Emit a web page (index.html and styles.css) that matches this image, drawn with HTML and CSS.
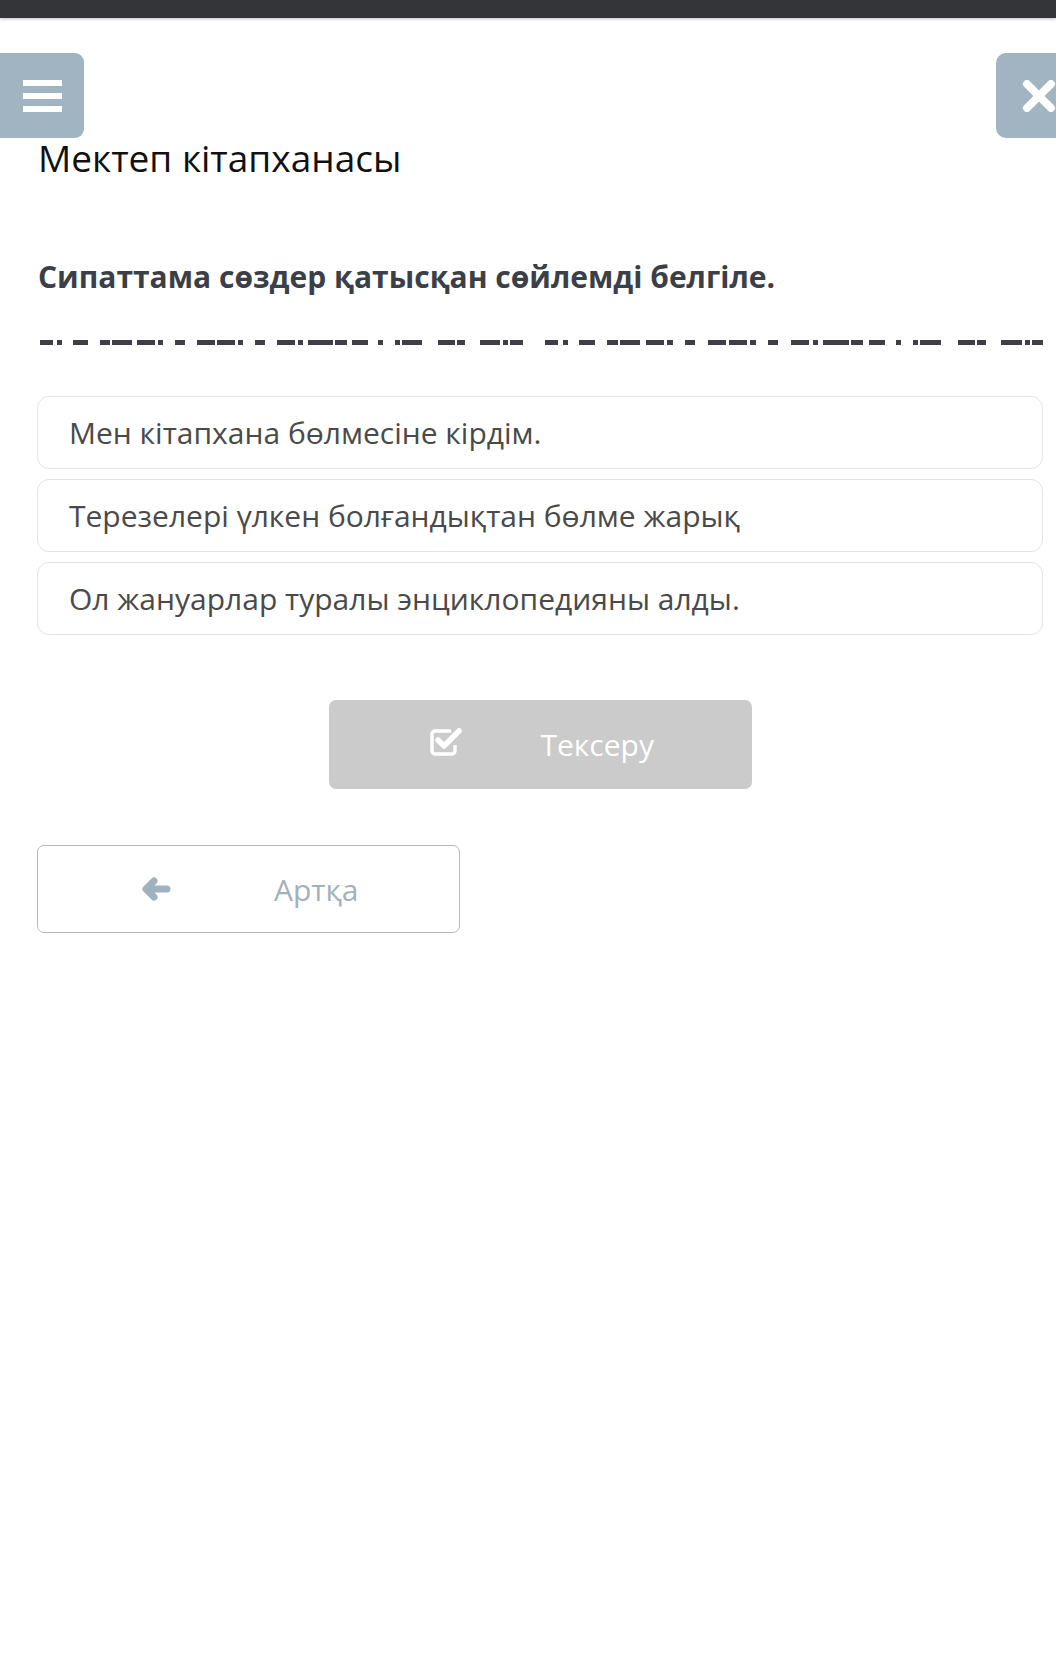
FILE: index.html
```html
<!DOCTYPE html>
<html lang="kk">
<head>
<meta charset="utf-8">
<title>Мектеп кітапханасы</title>
<link rel="stylesheet" href="styles.css">
</head>
<body>
<div class="topbar"></div>
<div class="header">
  <button class="side-btn menu-btn" aria-label="Мәзір">
    <span class="bar"></span><span class="bar"></span><span class="bar"></span>
  </button>
  <button class="side-btn close-btn" aria-label="Жабу">
    <svg width="34" height="32" viewBox="0 0 34 32"><path d="M5 4 L29 28 M29 4 L5 28" stroke="#fff" stroke-width="8" stroke-linecap="round"/></svg>
  </button>
</div>
<main class="content">
  <h1 class="title">Мектеп кітапханасы</h1>
  <h2 class="question">Сипаттама сөздер қатысқан сөйлемді белгіле.</h2>
  <div class="dashes"><span class="dash-group"></span><span class="dash-group dash-group-wide"></span></div>
  <div class="options">
    <div class="option">Мен кітапхана бөлмесіне кірдім.</div>
    <div class="option">Терезелері үлкен болғандықтан бөлме жарық</div>
    <div class="option">Ол жануарлар туралы энциклопедияны алды.</div>
  </div>
  <div class="check-row">
    <button class="btn check-btn">
      <svg class="check-icon" width="34" height="30" viewBox="0 0 34 30"><path d="M22 4 H6 a3 3 0 0 0 -3 3 V24 a3 3 0 0 0 3 3 H23 a3 3 0 0 0 3 -3 V18" fill="none" stroke="#fff" stroke-width="3.4"/><path d="M9 13 L15 19 L30 4" fill="none" stroke="#fff" stroke-width="5.5" stroke-linecap="round" stroke-linejoin="round"/></svg>
      <span class="check-label">Тексеру</span>
    </button>
  </div>
  <button class="btn back-btn">
    <svg class="back-icon" width="30" height="24" viewBox="0 0 30 24"><path d="M26 12 H6 M13 4 L5 12 L13 20" fill="none" stroke="#9fb2bf" stroke-width="7" stroke-linecap="round" stroke-linejoin="round"/></svg>
    <span class="back-label">Артқа</span>
  </button>
</main>
</body>
</html>
```
FILE: styles.css
```css
html, body {
  margin: 0;
  padding: 0;
  background: #fff;
  font-family: "Open Sans", "Noto Sans", sans-serif;
  overflow-x: hidden;
}
.topbar {
  height: 18px;
  background: #343538;
  box-shadow: 0 1px 3px rgba(0,0,0,0.25);
}
.header {
  display: flex;
  justify-content: space-between;
  margin-top: 35px;
  height: 85px;
  overflow: hidden;
}
.side-btn {
  border: 0;
  padding: 0;
  background: #a0b4c1;
  height: 85px;
  display: flex;
  align-items: center;
  justify-content: center;
}
.menu-btn {
  width: 84px;
  border-radius: 0 9px 9px 0;
  flex-direction: column;
  gap: 7px;
  padding-left: 1px;
}
.bar {
  display: block;
  width: 39px;
  height: 6px;
  background: #fff;
}
.close-btn {
  width: 85px;
  margin-right: -25px;
  border-radius: 10px 0 0 10px;
}
.content {
  margin: 0 13px 0 37px;
}
.title {
  margin: -2px 0 0 1px;
  font-size: 37px;
  line-height: 44px;
  font-weight: 400;
  color: #111;
}
.question {
  margin: 79px 0 0 1px;
  font-size: 30px;
  line-height: 36px;
  font-weight: 700;
  color: #3b3f47;
}
.dashes {
  margin: 45px 0 0 3px;
  height: 5px;
  display: flex;
  overflow: hidden;
}
.dash-group {
  flex: 0 0 505px;
  height: 5px;
  background: linear-gradient(to right,
    #3d4049 0 13px, transparent 13px 17px, #3d4049 17px 22px, transparent 22px 33px,
    #3d4049 33px 48px, transparent 48px 60px, #3d4049 60px 70px, transparent 70px 72px,
    #3d4049 72px 92px, transparent 92px 97px, #3d4049 97px 115px, transparent 115px 118px,
    #3d4049 118px 123px, transparent 123px 135px, #3d4049 135px 145px, transparent 145px 157px,
    #3d4049 157px 175px, transparent 175px 177px, #3d4049 177px 195px, transparent 195px 198px,
    #3d4049 198px 203px, transparent 203px 215px, #3d4049 215px 225px, transparent 225px 237px,
    #3d4049 237px 255px, transparent 255px 258px, #3d4049 258px 263px, transparent 263px 268px,
    #3d4049 268px 293px, transparent 293px 295px, #3d4049 295px 307px, transparent 307px 312px,
    #3d4049 312px 328px, transparent 328px 338px, #3d4049 338px 343px, transparent 343px 355px,
    #3d4049 355px 360px, transparent 360px 362px, #3d4049 362px 382px, transparent 382px 398px,
    #3d4049 398px 415px, transparent 415px 417px, #3d4049 417px 425px, transparent 425px 440px,
    #3d4049 440px 460px, transparent 460px 463px, #3d4049 463px 468px, transparent 468px 470px,
    #3d4049 470px 483px, transparent 483px 505px);
}
.dash-group-wide {
  transform: scaleX(1.037);
  transform-origin: left center;
}
.options {
  margin-top: 51px;
  display: flex;
  flex-direction: column;
  gap: 10px;
}
.option {
  height: 71px;
  border: 1px solid #e3e3e3;
  border-radius: 12px;
  box-sizing: content-box;
  display: flex;
  align-items: center;
  padding-left: 31px;
  font-size: 30px;
  color: #4a4a4a;
}
.check-row {
  display: flex;
  justify-content: center;
  margin-top: 65px;
}
.btn {
  width: 423px;
  height: 89px;
  border-radius: 7px;
  display: flex;
  align-items: center;
  padding: 0;
  font-family: "Open Sans", "Noto Sans", sans-serif;
  font-size: 30px;
  box-sizing: border-box;
}
.check-btn {
  background: #cbcbcb;
  border: 0;
  color: #fff;
}
.check-icon {
  margin-left: 100px;
  margin-top: -6px;
}
.check-label {
  margin-left: 78px;
}
.back-btn {
  margin-top: 56px;
  background: #fff;
  border: 1px solid #b9b9b9;
  color: #a2b2bc;
  height: 88px;
}
.back-icon {
  margin-left: 103px;
}
.back-label {
  margin-left: 103px;
}
```
